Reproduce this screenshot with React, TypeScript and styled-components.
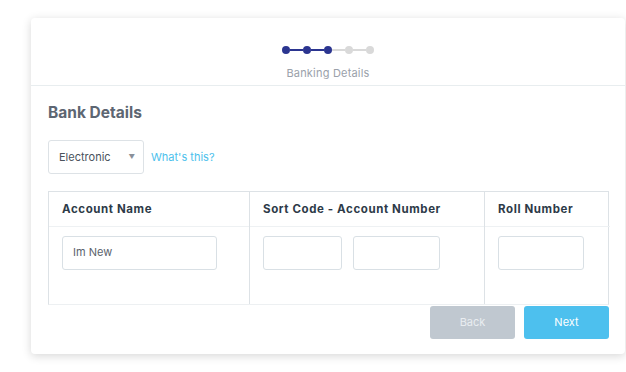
import React from "react";
import styled, { createGlobalStyle } from "styled-components";

const Global = createGlobalStyle`
  html, body { margin: 0; padding: 0; background: #ffffff; }
  body { font-family: "Inter", "Open Sans", sans-serif; overflow: hidden; }
  * { box-sizing: border-box; }
`;

const Page = styled.div`
  width: 626px;
  height: 372px;
  padding: 18px 0 0 31px;
`;

const Card = styled.div`
  width: 594px;
  height: 336px;
  background: #fff;
  border-radius: 4px;
  box-shadow: 0 2px 10px rgba(0, 0, 0, 0.16);
  display: flex;
  flex-direction: column;
`;

const Header = styled.div`
  height: 68px;
  border-bottom: 1px solid #e8edef;
  display: flex;
  flex-direction: column;
  align-items: center;
  padding-top: 28px;
`;

const Stepper = styled.div`
  display: flex;
  align-items: center;
  height: 8px;
`;

const Dot = styled.span<{ $on: boolean }>`
  width: 8px;
  height: 8px;
  border-radius: 50%;
  background: ${(p) => (p.$on ? "#2b3590" : "#d9d9d9")};
`;

const Line = styled.span<{ $on: boolean }>`
  width: 13px;
  height: 2px;
  background: ${(p) => (p.$on ? "#2b3590" : "#d9d9d9")};
`;

const StepLabel = styled.div`
  margin-top: 12px;
  font-size: 11px;
  letter-spacing: 0.2px;
  color: #9aa1aa;
`;

const Body = styled.div`
  padding: 17px 16px 0 17px;
  display: flex;
  flex-direction: column;
`;

const Title = styled.h2`
  margin: 0;
  font-size: 15.5px;
  font-weight: 700;
  color: #5d6672;
  line-height: 20px;
`;

const SelectRow = styled.div`
  margin-top: 17px;
  display: flex;
  align-items: center;
  gap: 7px;
`;

const Select = styled.div`
  width: 96px;
  height: 34px;
  border: 1px solid #dde2e6;
  border-radius: 3px;
  display: flex;
  align-items: center;
  justify-content: space-between;
  padding: 0 8px 0 10px;
  font-size: 11px;
  color: #4a525c;
`;

const Caret = styled.span`
  font-size: 6.5px;
  color: #8a9099;
`;

const Link = styled.a`
  font-size: 11px;
  color: #4cbfec;
  text-decoration: none;
`;

const Table = styled.div`
  margin-top: 17px;
  display: grid;
  grid-template-columns: 201px 235px 125px;
  border: 1px solid #dde2e6;
  border-bottom-color: #edf0f2;
`;

const Col = styled.div<{ $last?: boolean }>`
  border-right: ${(p) => (p.$last ? "none" : "1px solid #dde2e6")};
  display: flex;
  flex-direction: column;
`;

const HeadCell = styled.div`
  height: 35px;
  border-bottom: 1px solid #eef1f3;
  display: flex;
  align-items: center;
  padding-left: 13px;
  font-size: 11.5px;
  font-weight: 700;
  color: #2d3a48;
  letter-spacing: 0.6px;
`;

const BodyCell = styled.div`
  height: 77px;
  padding: 9px 0 0 13px;
  display: flex;
  gap: 11px;
`;

const Input = styled.div<{ $w: number }>`
  width: ${(p) => p.$w}px;
  height: 34px;
  border: 1px solid #d9e0e5;
  border-radius: 3px;
  display: flex;
  align-items: center;
  padding: 0 0 2px 10px;
  font-size: 11px;
  color: #5a626c;
`;

const Actions = styled.div`
  display: flex;
  justify-content: flex-end;
  gap: 9px;
  margin-top: 1px;
`;

const Button = styled.button<{ $primary?: boolean }>`
  width: 85px;
  height: 33px;
  border: none;
  border-radius: 3px;
  font-family: inherit;
  font-size: 11px;
  padding: 0 0 2px;
  background: ${(p) => (p.$primary ? "#4dc0ee" : "#c0c8d0")};
  color: ${(p) => (p.$primary ? "#ffffff" : "#e9edf0")};
`;

export default function App() {
  const steps = [true, true, true, false, false];
  return (
    <>
      <Global />
      <Page>
        <Card>
          <Header>
            <Stepper>
              {steps.map((on, i) => (
                <React.Fragment key={i}>
                  {i > 0 && <Line $on={on} />}
                  <Dot $on={on} />
                </React.Fragment>
              ))}
            </Stepper>
            <StepLabel>Banking Details</StepLabel>
          </Header>
          <Body>
            <Title>Bank Details</Title>
            <SelectRow>
              <Select>
                Electronic <Caret>▼</Caret>
              </Select>
              <Link>What's this?</Link>
            </SelectRow>
            <Table>
              <Col>
                <HeadCell>Account Name</HeadCell>
                <BodyCell>
                  <Input $w={155}>Im New</Input>
                </BodyCell>
              </Col>
              <Col>
                <HeadCell>Sort Code - Account Number</HeadCell>
                <BodyCell>
                  <Input $w={79} />
                  <Input $w={87} />
                </BodyCell>
              </Col>
              <Col $last>
                <HeadCell>Roll Number</HeadCell>
                <BodyCell>
                  <Input $w={86} />
                </BodyCell>
              </Col>
            </Table>
            <Actions>
              <Button>Back</Button>
              <Button $primary>Next</Button>
            </Actions>
          </Body>
        </Card>
      </Page>
    </>
  );
}
